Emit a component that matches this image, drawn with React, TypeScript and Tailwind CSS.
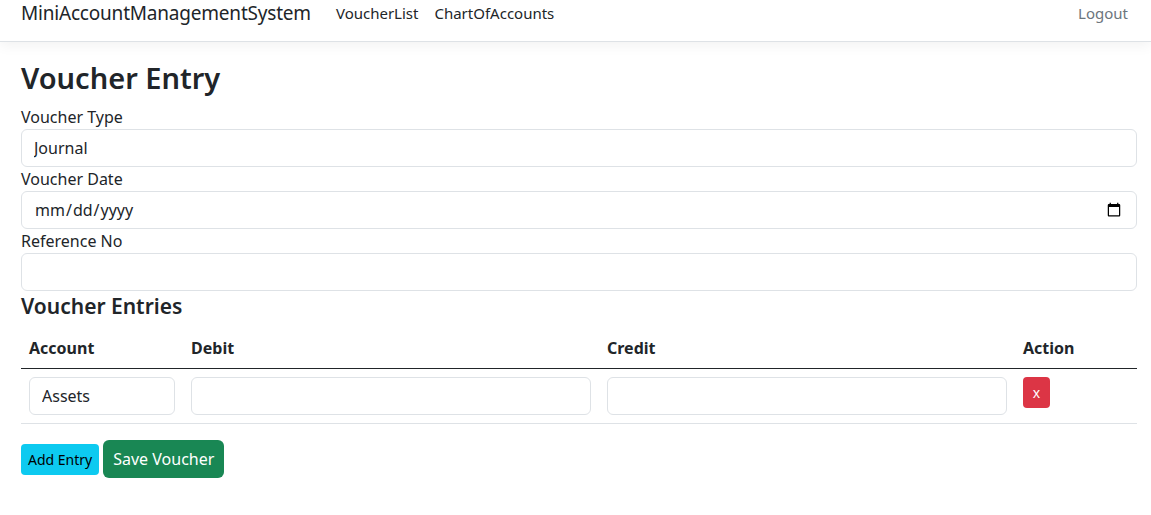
import React from 'react';

const font = { fontFamily: '"Segoe UI", "Noto Sans", "Liberation Sans", sans-serif' };

const inputCls =
  'block w-full h-[38px] px-3 rounded-[6px] border border-[#dee2e6] bg-white text-[16px] text-[#212529] outline-none';

const App = () => {
  return (
    <div className="min-h-screen bg-white text-[#212529]" style={font}>
      {/* Navbar */}
      <nav className="h-[42px] border-b border-[#dee2e6] shadow-[0_4px_12px_rgba(0,0,0,0.05)] bg-white flex items-start pl-[21px] pr-[15px]">
        <div className="flex items-center h-[27px]">
          <span className="text-[19px] text-[#212529] mr-[25px] tracking-[-0.2px]">MiniAccountManagementSystem</span>
          <a className="text-[15px] text-[#212529] mr-[16px]">VoucherList</a>
          <a className="text-[15px] text-[#212529]">ChartOfAccounts</a>
        </div>
        <div className="ml-auto flex items-center h-[27px] pr-[8px]">
          <a className="text-[15px] text-[#6c757d]">Logout</a>
        </div>
      </nav>

      {/* Form */}
      <main className="pl-[21px] pr-[14px] pt-[16px]">
        <h1 className="text-[29px] leading-[39px] font-semibold mb-[8px]">Voucher Entry</h1>

        <label className="block text-[16px] leading-[24px]">Voucher Type</label>
        <input className={inputCls} defaultValue="Journal" />

        <label className="block text-[16px] leading-[24px]">Voucher Date</label>
        <input type="date" className={inputCls} />

        <label className="block text-[16px] leading-[24px]">Reference No</label>
        <input className={inputCls} />

        <h4 className="text-[21px] leading-[27px] font-semibold mt-[2px] mb-[8px]">Voucher Entries</h4>

        <table className="w-full border-collapse text-[16px]">
          <thead>
            <tr className="border-b border-[#212529]">
              <th className="text-left font-bold p-[8px] w-[162px]">Account</th>
              <th className="text-left font-bold p-[8px] w-[416px]">Debit</th>
              <th className="text-left font-bold p-[8px] w-[416px]">Credit</th>
              <th className="text-left font-bold p-[8px]">Action</th>
            </tr>
          </thead>
          <tbody>
            <tr className="border-b border-[#dee2e6]">
              <td className="p-[8px] align-top">
                <input className={inputCls} defaultValue="Assets" />
              </td>
              <td className="p-[8px] align-top">
                <input className={inputCls} />
              </td>
              <td className="p-[8px] align-top">
                <input className={inputCls} />
              </td>
              <td className="p-[8px] align-top">
                <button className="h-[31px] w-[27px] rounded-[4px] bg-[#dc3545] text-white text-[14px]">x</button>
              </td>
            </tr>
          </tbody>
        </table>

        <div className="flex items-center gap-[4px] mt-[16px]">
          <button className="h-[31px] px-[7px] rounded-[4px] bg-[#0dcaf0] text-black text-[14px]">Add Entry</button>
          <button className="h-[38px] px-[10px] rounded-[6px] bg-[#198754] text-white text-[16px]">Save Voucher</button>
        </div>
      </main>
    </div>
  );
};

export default App;
